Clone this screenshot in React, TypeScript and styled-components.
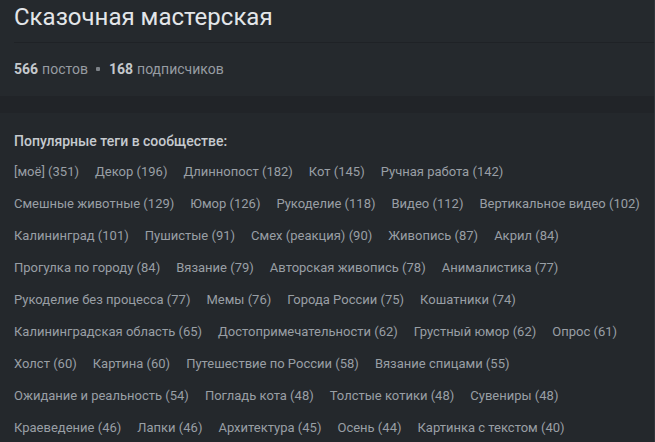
import React from "react";
import styled, { createGlobalStyle } from "styled-components";

const Global = createGlobalStyle`
  html, body { margin: 0; padding: 0; background: #222529; }
  body { font-family: Roboto, "Noto Sans", Arial, sans-serif; }
`;

const Page = styled.div`
  width: 655px;
  height: 442px;
  overflow: hidden;
  display: flex;
  flex-direction: column;
  background: #212428;
  border-right: 1px solid #30353a;
  box-sizing: border-box;
`;

const Header = styled.section`
  background: #25292d;
  padding: 0 0 0 14px;
  height: 96px;
  box-sizing: border-box;
`;

const Title = styled.h1`
  margin: 0;
  height: 43px;
  display: flex;
  align-items: center;
  padding-bottom: 8px;
  box-sizing: border-box;
  font-size: 24px;
  font-weight: 400;
  color: #e3e6e9;
  border-bottom: 1px solid #1f2226;
`;

const Stats = styled.div`
  display: flex;
  align-items: center;
  height: 52px;
  font-size: 14px;
  color: #979ca2;
`;

const Num = styled.b`
  font-weight: 700;
  color: #c4c8cc;
  margin-right: 4px;
`;

const Dot = styled.span`
  width: 4px;
  height: 4px;
  border-radius: 1px;
  background: #7d8288;
  margin: 0 9px 0 8px;
`;

const Tags = styled.section`
  margin-top: 17px;
  flex: 1;
  background: #24282c;
  padding: 18px 13px 0 14px;
`;

const TagsTitle = styled.div`
  font-size: 14px;
  font-weight: 500;
  color: #c6cacf;
  line-height: 20px;
  margin-bottom: 11px;
`;

const TagList = styled.div`
  display: flex;
  flex-wrap: wrap;
  column-gap: 16px;
  row-gap: 12px;
`;

const Tag = styled.a`
  font-size: 13px;
  line-height: 20px;
  color: #999fa5;
  text-decoration: none;
  white-space: nowrap;
`;

const tags: [string, number][] = [
  ["[моё]", 351], ["Декор", 196], ["Длиннопост", 182], ["Кот", 145], ["Ручная работа", 142],
  ["Смешные животные", 129], ["Юмор", 126], ["Рукоделие", 118], ["Видео", 112], ["Вертикальное видео", 102],
  ["Калининград", 101], ["Пушистые", 91], ["Смех (реакция)", 90], ["Живопись", 87], ["Акрил", 84],
  ["Прогулка по городу", 84], ["Вязание", 79], ["Авторская живопись", 78], ["Анималистика", 77],
  ["Рукоделие без процесса", 77], ["Мемы", 76], ["Города России", 75], ["Кошатники", 74],
  ["Калининградская область", 65], ["Достопримечательности", 62], ["Грустный юмор", 62], ["Опрос", 61],
  ["Холст", 60], ["Картина", 60], ["Путешествие по России", 58], ["Вязание спицами", 55],
  ["Ожидание и реальность", 54], ["Погладь кота", 48], ["Толстые котики", 48], ["Сувениры", 48],
  ["Краеведение", 46], ["Лапки", 46], ["Архитектура", 45], ["Осень", 44], ["Картинка с текстом", 40],
];

export default function App() {
  return (
    <>
      <Global />
      <Page>
        <Header>
          <Title>Сказочная мастерская</Title>
          <Stats>
            <Num>566</Num>постов
            <Dot />
            <Num>168</Num>подписчиков
          </Stats>
        </Header>
        <Tags>
          <TagsTitle>Популярные теги в сообществе:</TagsTitle>
          <TagList>
            {tags.map(([name, n]) => (
              <Tag key={name} href="#">{name} ({n})</Tag>
            ))}
          </TagList>
        </Tags>
      </Page>
    </>
  );
}
